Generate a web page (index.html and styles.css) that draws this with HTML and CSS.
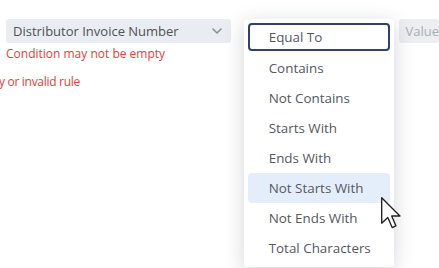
FILE: index.html
```html
<!DOCTYPE html>
<html lang="en">
<head>
  <meta charset="UTF-8">
  <title>Rule Builder</title>
  <link rel="stylesheet" href="styles.css">
</head>
<body>

  <div class="rule-row">
    <div class="field-col">
      <div class="select">
        <span>Distributor Invoice Number</span>
        <svg class="chevron" width="10" height="6" viewBox="0 0 10 6"><path d="M1 1 L5 5 L9 1" fill="none" stroke="#8a8f99" stroke-width="1.6" stroke-linecap="round" stroke-linejoin="round"/></svg>
      </div>
      <div class="error">Condition may not be empty</div>
    </div>

    <div class="operator-col">
      <ul class="menu">
        <li class="focused">Equal To</li>
        <li>Contains</li>
        <li>Not Contains</li>
        <li>Starts With</li>
        <li>Ends With</li>
        <li class="hover">Not Starts With</li>
        <li>Not Ends With</li>
        <li>Total Characters</li>
      </ul>
      <svg class="cursor" width="22" height="34" viewBox="0 0 13 20"><path d="M1 1 L1 16 L4.6 12.6 L7.2 18.6 L9.4 17.6 L6.9 11.8 L11.8 11.8 Z" fill="#fff" stroke="#222" stroke-width="0.8" stroke-linejoin="round"/></svg>
    </div>

    <div class="value-col">
      <div class="value-input">Value</div>
    </div>
  </div>

  <div class="rule-error">y or invalid rule</div>

</body>
</html>
```

FILE: styles.css
```css
* {
  margin: 0;
  padding: 0;
  box-sizing: border-box;
  font-family: 'Open Sans', sans-serif;
}

body {
  background-color: #fff;
  color: #4a4d52;
  width: 439px;
  height: 268px;
  overflow: hidden;
}

.rule-row {
  display: flex;
  padding-top: 19px;
}

.field-col {
  margin-left: 6px;
  width: 225px;
}

.select {
  height: 24px;
  background: #e9ecf0;
  border-radius: 3px;
  display: flex;
  align-items: center;
  justify-content: space-between;
  padding: 0 9px 0 7px;
  font-size: 13px;
  color: #4f5258;
}

.error {
  color: #e2403b;
  font-size: 12px;
  margin-top: 2px;
}

.operator-col {
  position: relative;
  width: 150px;
  margin-left: 13px;
}

.menu {
  position: absolute;
  top: 0;
  left: 0;
  width: 150px;
  list-style: none;
  background: #fff;
  border-radius: 4px;
  padding: 4px;
  box-shadow: 0 4px 20px rgba(40, 50, 70, 0.2);
  z-index: 2;
}

.menu li {
  height: 30px;
  line-height: 30px;
  padding-left: 21px;
  font-size: 13.4px;
  color: #55585e;
  border-radius: 4px;
}

.menu li.focused {
  height: 28px;
  line-height: 24px;
  margin-bottom: 2px;
  padding-left: 19px;
  border: 2px solid #2e4366;
}

.menu li.hover {
  background: #e4eefb;
}

.cursor {
  position: absolute;
  left: 136px;
  top: 177px;
  z-index: 3;
}

.value-col {
  margin-left: 6px;
  flex: 1;
}

.value-input {
  height: 24px;
  background: #eceef1;
  border-radius: 3px;
  padding-left: 6px;
  line-height: 24px;
  font-size: 13px;
  color: #a9adb3;
  white-space: nowrap;
  overflow: hidden;
}

.rule-error {
  color: #e2403b;
  font-size: 12px;
  letter-spacing: -0.3px;
  margin-top: 11px;
  margin-left: -1px;
}
```
